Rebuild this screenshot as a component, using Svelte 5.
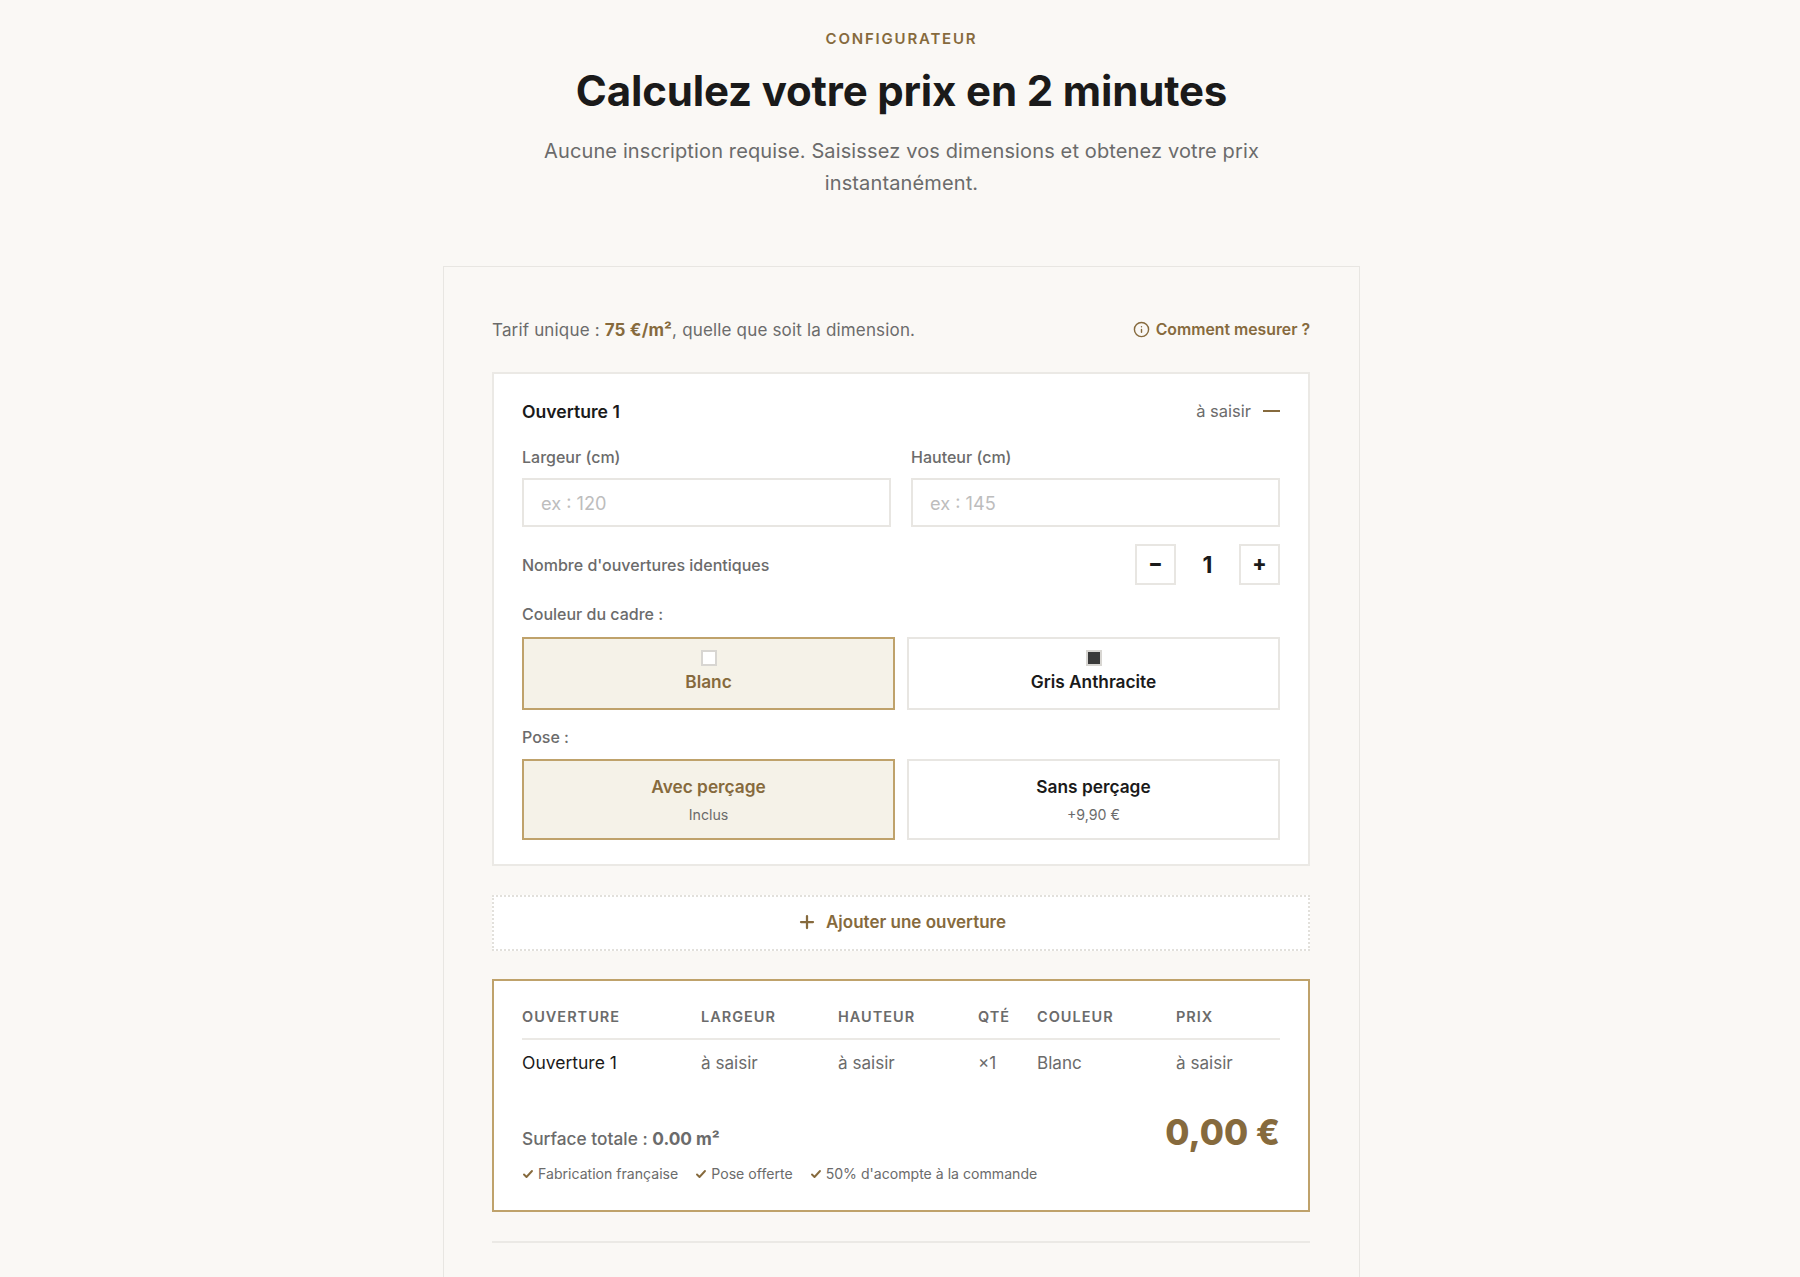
<script>
  const cols = ['Ouverture', 'Largeur', 'Hauteur', 'Qté', 'Couleur', 'Prix'];
  const cells = ['à saisir', 'à saisir', '×1', 'Blanc', 'à saisir'];
  const perks = ['Fabrication française', 'Pose offerte', "50% d'acompte à la commande"];
</script>

<div class="page">
  <header class="head">
    <p class="eyebrow">Configurateur</p>
    <h1>Calculez votre prix en 2 minutes</h1>
    <p class="lede">Aucune inscription requise. Saisissez vos dimensions et obtenez votre prix instantanément.</p>
  </header>

  <section class="card">
    <div class="rate">
      <p>Tarif unique : <strong>75 €/m²</strong>, quelle que soit la dimension.</p>
      <button class="how">
        <svg width="17" height="17" viewBox="0 0 24 24" fill="none" stroke="currentColor" stroke-width="2" stroke-linecap="round"><circle cx="12" cy="12" r="10"/><path d="M12 16v-4M12 8h.01"/></svg>
        Comment mesurer ?
      </button>
    </div>

    <div class="panel">
      <div class="panel-head">
        <span class="name">Ouverture 1</span>
        <span class="status">à saisir <i class="dash"></i></span>
      </div>

      <div class="dims">
        <label>Largeur (cm)<input placeholder="ex : 120" /></label>
        <label>Hauteur (cm)<input placeholder="ex : 145" /></label>
      </div>

      <div class="qty">
        <span class="lbl">Nombre d'ouvertures identiques</span>
        <div class="stepper">
          <button>−</button>
          <span>1</span>
          <button>+</button>
        </div>
      </div>

      <p class="lbl group">Couleur du cadre :</p>
      <div class="choices">
        <button class="choice colour on"><i class="swatch white"></i>Blanc</button>
        <button class="choice colour"><i class="swatch dark"></i>Gris Anthracite</button>
      </div>

      <p class="lbl group pose">Pose :</p>
      <div class="choices tight">
        <button class="choice fit on">Avec perçage<small>Inclus</small></button>
        <button class="choice fit">Sans perçage<small>+9,90 €</small></button>
      </div>
    </div>

    <button class="add">
      <svg width="18" height="18" viewBox="0 0 24 24" fill="none" stroke="currentColor" stroke-width="3" stroke-linecap="round"><path d="M12 4v16M4 12h16"/></svg>
      Ajouter une ouverture
    </button>

    <div class="summary">
      <table>
        <colgroup>
          <col style="width:179px" /><col style="width:137px" /><col style="width:140px" /><col style="width:59px" /><col style="width:139px" /><col />
        </colgroup>
        <thead>
          <tr>{#each cols as c}<th>{c}</th>{/each}</tr>
        </thead>
        <tbody>
          <tr>
            <td class="first">Ouverture 1</td>
            {#each cells as c}<td>{c}</td>{/each}
          </tr>
        </tbody>
      </table>
      <div class="total">
        <p class="surface">Surface totale : <strong>0.00 m²</strong></p>
        <p class="price">0,00 €</p>
      </div>
      <ul class="perks">
        {#each perks as p}
          <li>
            <svg width="12" height="12" viewBox="0 0 24 24" fill="none" stroke="#866a3d" stroke-width="3.8" stroke-linecap="round" stroke-linejoin="round"><path d="M4 13l5 5L20 6"/></svg>
            {p}
          </li>
        {/each}
      </ul>
    </div>

    <hr />
  </section>
</div>

<style>
  :global(body) {
    margin: 0;
    background: #faf8f5;
    font-family: Inter, "Liberation Sans", sans-serif;
    color: #1a1a1a;
  }
  p, h1, ul { margin: 0; padding: 0; }
  button { font-family: inherit; cursor: pointer; }

  .page {
    height: 1277px;
    overflow: hidden;
    box-sizing: border-box;
    padding: 30px 0 0 3px;
  }
  .head { text-align: center; }
  .eyebrow {
    font-size: 15px;
    line-height: 18px;
    font-weight: 600;
    letter-spacing: 1.8px;
    text-transform: uppercase;
    color: #866a3d;
  }
  h1 {
    margin-top: 16px;
    font-size: 42px;
    line-height: 54px;
    font-weight: 700;
    letter-spacing: -0.16px;
  }
  .lede {
    width: 760px;
    margin: 17px auto 0;
    font-size: 20px;
    line-height: 32px;
    letter-spacing: 0.13px;
    color: #6b6b6b;
  }
  .card {
    box-sizing: border-box;
    width: 917px;
    margin: 67px auto 0;
    padding: 48px 49px 48px 48px;
    border: 1px solid #e8e6e2;
    min-height: 1100px;
  }
  .rate {
    display: flex;
    justify-content: space-between;
    align-items: center;
    height: 30px;
    font-size: 17px;
    letter-spacing: 0.17px;
    color: #6b6b6b;
  }
  .rate strong { color: #866a3d; font-weight: 700; }
  .how {
    display: flex;
    align-items: center;
    gap: 6px;
    padding: 0 0 1px;
    border: 0;
    background: none;
    font-size: 15.8px;
    font-weight: 600;
    color: #866a3d;
  }
  .panel {
    margin-top: 27px;
    padding: 26px 28px 24px;
    background: #fff;
    border: 2px solid #ebe9e5;
  }
  .panel-head {
    display: flex;
    justify-content: space-between;
    align-items: center;
    height: 22px;
  }
  .name { font-size: 17.6px; font-weight: 600; }
  .status {
    display: flex;
    align-items: center;
    gap: 12px;
    font-size: 16.5px;
    color: #6b6b6b;
  }
  .dash { display: block; width: 17px; height: 2px; background: #866a3d; }
  .dims {
    display: grid;
    grid-template-columns: 1fr 1fr;
    gap: 20px;
    margin-top: 26px;
  }
  label, .lbl {
    font-size: 16px;
    font-weight: 500;
    color: #6b6b6b;
  }
  label { display: block; line-height: 18px; }
  input {
    display: block;
    box-sizing: border-box;
    width: 100%;
    height: 49px;
    margin-top: 12px;
    padding: 0 17px;
    border: 2px solid #e8e6e2;
    background: #fff;
    font: 400 18.2px Inter, sans-serif;
  }
  input::placeholder { color: #bdbdbd; opacity: 1; }
  .qty {
    display: flex;
    justify-content: space-between;
    align-items: center;
    margin-top: 17px;
  }
  .stepper { display: flex; align-items: center; font-size: 23px; font-weight: 700; }
  .stepper span { width: 63px; text-align: center; }
  .stepper button {
    width: 41px;
    height: 41px;
    padding: 0 0 2px;
    border: 2px solid #e8e6e2;
    background: #fff;
    font-size: 21px;
    font-weight: 800;
    color: #1a1a1a;
  }
  .group { margin-top: 20px; line-height: 18px; }
  .group.pose { margin-top: 18px; }
  .choices {
    display: grid;
    grid-template-columns: 1fr 1fr;
    gap: 12px;
    margin-top: 14px;
  }
  .choices.tight { margin-top: 13px; }
  .choice {
    display: flex;
    flex-direction: column;
    align-items: center;
    border: 2px solid #e8e6e2;
    background: #fff;
    padding: 0;
    font-size: 17.3px;
    font-weight: 600;
    color: #1a1a1a;
  }
  .choice.on { background: #f5f2e8; border-color: #bfa26b; color: #866a3d; }
  .colour { height: 73px; padding-top: 11px; }
  .fit { height: 81px; padding-top: 15px; }
  .swatch {
    display: block;
    box-sizing: border-box;
    width: 16px;
    height: 16px;
    margin-bottom: 5px;
  }
  .swatch.white { background: #fff; border: 2px solid #d8d6d2; }
  .swatch.dark { background: #3a3a3a; border: 2px solid #d8d6d2; }
  small {
    margin-top: 9px;
    font-size: 14.2px;
    font-weight: 400;
    color: #6b6b6b;
  }
  .add {
    display: flex;
    align-items: center;
    justify-content: center;
    gap: 10px;
    width: 100%;
    height: 56px;
    margin-top: 29px;
    padding: 0 0 2px 2px;
    border: 2px dotted #e2e0db;
    background: #fff;
    font-size: 17px;
    font-weight: 600;
    color: #866a3d;
  }
  .summary {
    margin-top: 28px;
    padding: 27px 28px 27px;
    background: #fff;
    border: 2px solid #bfa26b;
  }
  table { width: 100%; table-layout: fixed; border-collapse: collapse; }
  th {
    padding: 0 0 12px;
    border-bottom: 2px solid #ebe9e5;
    text-align: left;
    font-size: 14.5px;
    line-height: 18px;
    font-weight: 600;
    letter-spacing: 1px;
    text-transform: uppercase;
    color: #6b6b6b;
  }
  td {
    padding: 12px 0 13px;
    font-size: 17.1px;
    line-height: 22px;
    color: #6b6b6b;
  }
  td.first { color: #1a1a1a; font-weight: 400; font-size: 17.5px; }
  .total {
    display: flex;
    justify-content: space-between;
    align-items: flex-end;
    margin-top: 23px;
  }
  .surface { font-size: 17.3px; font-weight: 500; color: #6b6b6b; line-height: 22px; }
  .surface strong { font-weight: 700; }
  .price { font-size: 35px; line-height: 44px; margin-bottom: -4px; font-weight: 800; color: #866a3d; }
  .perks {
    display: flex;
    gap: 17px;
    margin-top: 15px;
    list-style: none;
    font-size: 14.1px;
    line-height: 18px;
    color: #6b6b6b;
  }
  .perks li { display: flex; align-items: center; gap: 4px; }
  hr {
    margin: 29px 0 0;
    border: 0;
    border-top: 2px solid #ebe9e5;
  }
</style>
